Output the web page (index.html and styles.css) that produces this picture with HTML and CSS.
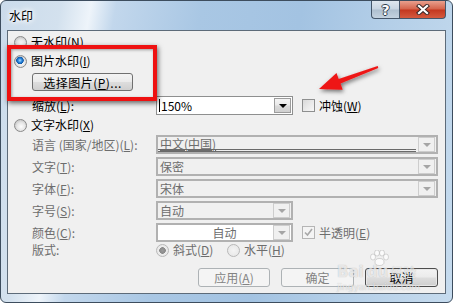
FILE: index.html
```html
<!DOCTYPE html>
<html lang="zh-CN">
<head>
  <meta charset="UTF-8">
  <title>水印</title>
  <link rel="stylesheet" href="styles.css">
</head>
<body>
  <div class="window">
    <div class="titlebar">
      <span class="title">水印</span>
      <div class="caption">
        <div class="cap-btn help">?</div>
        <div class="cap-btn close">
          <svg width="16" height="11" viewBox="0 0 16 11">
            <path d="M4 2 L12 9 M12 2 L4 9" stroke="#3b2a2a" stroke-width="4.2" stroke-linecap="square"/>
            <path d="M4 2 L12 9 M12 2 L4 9" stroke="#fff" stroke-width="2.2" stroke-linecap="square"/>
          </svg>
        </div>
      </div>
    </div>

    <div class="client">
      <div class="opt"><span class="radio"></span>无水印(<u>N</u>)</div>
      <div class="opt gap3"><span class="radio on"></span>图片水印(<u>I</u>)</div>
      <button class="btn pick">选择图片(<u>P</u>)...</button>

      <div class="field zoom">
        <span class="lbl">缩放(<u>L</u>):</span>
        <div class="combo narrow">
          <span class="val"><span class="caret"></span>150%</span>
          <span class="drop"><i></i></span>
        </div>
        <span class="check"></span><span>冲蚀(<u>W</u>)</span>
      </div>

      <div class="opt gap2"><span class="radio"></span>文字水印(<u>X</u>)</div>

      <div class="field first off">
        <span class="lbl">语言 (国家/地区)(<u>L</u>):</span>
        <div class="combo wide">
          <span class="val lang"><u>中文(中国)</u></span>
          <span class="drop"><i></i></span>
        </div>
      </div>
      <div class="field off">
        <span class="lbl">文字(<u>T</u>):</span>
        <div class="combo wide">
          <span class="val">保密</span>
          <span class="drop"><i></i></span>
        </div>
      </div>
      <div class="field off">
        <span class="lbl">字体(<u>F</u>):</span>
        <div class="combo wide">
          <span class="val">宋体</span>
          <span class="drop"><i></i></span>
        </div>
      </div>
      <div class="field off">
        <span class="lbl">字号(<u>S</u>):</span>
        <div class="combo narrow">
          <span class="val">自动</span>
          <span class="drop"><i></i></span>
        </div>
      </div>
      <div class="field off">
        <span class="lbl">颜色(<u>C</u>):</span>
        <div class="combo narrow white">
          <span class="val center">自动</span>
          <span class="drop"><i></i></span>
        </div>
        <span class="check checked">
          <svg width="9" height="9" viewBox="0 0 9 9"><path d="M1 4.5 L3.5 7 L8 1" fill="none" stroke="#a8a8a8" stroke-width="1.6"/></svg>
        </span><span>半透明(<u>E</u>)</span>
      </div>

      <div class="layout off">
        <span class="lbl">版式:</span>
        <span class="ropt"><span class="radio dis on"></span>斜式(<u>D</u>)</span>
        <span class="ropt"><span class="radio dis"></span>水平(<u>H</u>)</span>
      </div>

      <div class="actions">
        <button class="btn off">应用(<u>A</u>)</button>
        <button class="btn off">确定</button>
        <button class="btn default">取消</button>
      </div>
    </div>

    <!-- annotation drawn over the dialog -->
    <div class="mark-box"></div>
    <svg class="mark-arrow" width="90" height="50" viewBox="0 0 90 50">
      <defs>
        <filter id="sh" x="-20%" y="-40%" width="150%" height="190%">
          <feDropShadow dx="1" dy="2" stdDeviation="2" flood-color="#000" flood-opacity="0.55"/>
        </filter>
      </defs>
      <polygon filter="url(#sh)" fill="#ee1515"
        points="19,34 42.7,34.7 40.5,28.6 78.3,12.9 77.7,11.1 38.7,24 36.5,17.9"/>
    </svg>

    <div class="watermark">
      <svg class="paw" width="24" height="16" viewBox="0 0 24 16">
        <g fill="rgba(255,255,255,0.75)" stroke="rgba(120,120,120,0.35)" stroke-width="0.8">
          <ellipse cx="6" cy="7" rx="2.5" ry="3"/>
          <ellipse cx="10" cy="3" rx="2.5" ry="3"/>
          <ellipse cx="15" cy="3" rx="2.5" ry="3"/>
          <ellipse cx="19" cy="7" rx="2.5" ry="3"/>
          <ellipse cx="12.5" cy="12" rx="4.5" ry="3.5"/>
        </g>
      </svg>
      <div class="wm-main"><span class="wm-bai">Bai</span><span class="wm-du">du</span><span class="wm-jy">经验</span></div>
      <div class="wm-url">jingyan.baidu.com</div>
    </div>
  </div>
</body>
</html>
```

FILE: styles.css
```css
body {
  margin: 0;
  background: #fff;
  font-family: "Noto Sans CJK SC", "Liberation Sans", sans-serif;
  font-size: 12px;
  color: #000;
}

.window {
  position: relative;
  width: 453px;
  height: 303px;
  box-sizing: border-box;
  border: 1px solid #3d4d5e;
  border-radius: 6px;
  overflow: hidden;
  display: flex;
  flex-direction: column;
  background:
    linear-gradient(100deg, #cbdbeb 0%, #d3e1ee 12%, #eef4fa 18%, #c2d7ec 23%, #a9c7e4 40%, #a3c3e2 60%, #b4cfe8 78%, #c6dbee 100%);
}

.titlebar {
  height: 29px;
  flex-shrink: 0;
  display: flex;
  align-items: flex-start;
}

.title {
  margin: 7px 0 0 8px;
  line-height: 16px;
  text-shadow: 0 0 4px #fff, 0 0 6px #fff, 0 0 8px #fff;
}

.caption {
  margin-left: auto;
  margin-right: 6px;
  display: flex;
}

.cap-btn {
  height: 18px;
  box-sizing: border-box;
  border: 1px solid #44566a;
  border-top: none;
  display: flex;
  align-items: center;
  justify-content: center;
}

.help {
  width: 28px;
  border-right: none;
  border-bottom-left-radius: 4px;
  background: linear-gradient(#dfe7ef 0%, #c8d5e2 48%, #aebfcf 52%, #c3d2e0 100%);
  color: #fff;
  font: bold 14px "DejaVu Sans", sans-serif;
  text-shadow: 1px 0 #2f3d4c, -1px 0 #2f3d4c, 0 1px #2f3d4c, 0 -1px #2f3d4c;
}

.close {
  width: 47px;
  border-bottom-right-radius: 4px;
  background: linear-gradient(#e8a08e 0%, #d4624a 48%, #c3371f 52%, #d45a3f 100%);
}

.client {
  flex: 1;
  margin: 0 6px 8px;
  border: 1px solid #5d6b79;
  background: #f0f0f0;
  padding: 3px 6px 0 6px;
  display: flex;
  flex-direction: column;
}

u {
  text-decoration: underline;
  text-underline-offset: 1px;
}

.opt {
  display: flex;
  align-items: center;
  height: 16px;
  line-height: 16px;
}

.gap3 { margin-top: 3px; }
.gap2 { margin-top: 2px; }

.radio {
  width: 13px;
  height: 13px;
  box-sizing: border-box;
  border-radius: 50%;
  border: 1px solid #8a8a8a;
  background: radial-gradient(circle at 55% 60%, #fdfdfd 0, #e6e6e6 4px, #d0d0d0 6px);
  margin-right: 4px;
  flex-shrink: 0;
}

.radio.on {
  background:
    radial-gradient(circle at 45% 40%, #a6dcff 0, #2a86dc 2px, #0f58a8 3.5px, transparent 4px),
    radial-gradient(circle at 55% 60%, #fdfdfd 0, #e6e6e6 4px, #d0d0d0 6px);
}

.radio.dis {
  border-color: #b8b8b8;
  background: radial-gradient(circle, #f4f4f4 0, #e8e8e8 6px);
}

.radio.dis.on {
  background:
    radial-gradient(circle, #9a9a9a 0, #8a8a8a 3px, transparent 3.6px),
    radial-gradient(circle, #f4f4f4 0, #e8e8e8 6px);
}

.btn {
  height: 19px;
  box-sizing: border-box;
  border: 1px solid #707070;
  border-radius: 3px;
  background: linear-gradient(#f3f3f3 0%, #ebebeb 48%, #dddddd 52%, #cfcfcf 100%);
  font-family: inherit;
  font-size: 12px;
  line-height: 15px;
  padding: 0;
  color: #000;
  text-align: center;
}

.pick {
  width: 101px;
  height: 18px;
  margin: 4px 0 0 18px;
  letter-spacing: 0.5px;
}

.field {
  display: flex;
  align-items: center;
  height: 19px;
  line-height: 16px;
  margin-top: 3px;
}

.field.zoom { margin-top: 5px; }
.field.first { margin-top: 2px; }

.lbl {
  width: 124px;
  margin-left: 18px;
  flex-shrink: 0;
  white-space: nowrap;
}

.off { color: #6d6d6d; }

.combo {
  height: 19px;
  box-sizing: border-box;
  border: 1px solid #8e8f8f;
  background: #fff;
  display: flex;
  align-items: center;
}

.combo.narrow { width: 137px; }
.combo.wide { width: 282px; }

.val {
  flex: 1;
  padding-left: 2px;
  line-height: 15px;
  display: flex;
  align-items: center;
}

.val.center { justify-content: center; padding-left: 18px; }

.caret {
  width: 1px;
  height: 13px;
  background: #000;
  margin-right: 1px;
}

.drop {
  width: 17px;
  height: 15px;
  box-sizing: border-box;
  margin-right: 1px;
  border: 1px solid #9c9c9c;
  background: linear-gradient(#f4f4f4 0%, #e9e9e9 48%, #dadada 52%, #d0d0d0 100%);
  display: flex;
  align-items: center;
  justify-content: center;
}

.drop i {
  width: 0;
  height: 0;
  border-left: 4px solid transparent;
  border-right: 4px solid transparent;
  border-top: 4px solid #000;
}

.off .combo {
  border: 2px solid #b1b1b1;
  background: #f0f0f0;
}

.off .combo.white { background: #fff; }

.off .drop {
  border-color: #cdcdcd;
  background: #f0f0f0;
}

.off .drop i { border-top-color: #a5a5a5; }

.val.lang {
  align-self: stretch;
  border-bottom: 3px double #6a6a6a;
  margin-right: 2px;
}

.check {
  width: 13px;
  height: 13px;
  box-sizing: border-box;
  border: 1px solid #8e8f8f;
  background: linear-gradient(135deg, #d9d9d9, #f8f8f8);
  margin: 0 4px 0 9px;
  display: flex;
  align-items: center;
  justify-content: center;
}

.check.checked {
  border-color: #b5b5b5;
  background: #f4f4f4;
}

.layout {
  display: flex;
  align-items: center;
  height: 16px;
  line-height: 16px;
}

.ropt {
  display: flex;
  align-items: center;
  width: 71px;
}

.actions {
  display: flex;
  justify-content: flex-end;
  gap: 11px;
  margin: 10px 1px 0 0;
}

.actions .btn { width: 73px; }
.actions .btn:first-child { width: 72px; }

.btn.off {
  border-color: #adb2b5;
  background: #f4f4f4;
  color: #838383;
}

.btn.default {
  border-color: #4d4d4d;
  box-shadow: inset 0 0 0 1px #e8e8e8;
}

.mark-box {
  position: absolute;
  left: 6px;
  top: 44px;
  width: 150px;
  height: 56px;
  box-sizing: border-box;
  border: 4px solid #ee1111;
  box-shadow: 1px 2px 5px rgba(0, 0, 0, 0.6), inset 1px 1px 3px rgba(0, 0, 0, 0.35);
}

.mark-arrow {
  position: absolute;
  left: 299px;
  top: 54px;
}

.watermark {
  position: absolute;
  left: 336px;
  top: 249px;
  width: 90px;
  color: rgba(255, 255, 255, 0.7);
  text-shadow: 0 0 1px rgba(90, 90, 90, 0.45);
}

.paw {
  display: block;
  margin-left: 30px;
}

.wm-main {
  display: flex;
  align-items: baseline;
  margin-top: -4px;
  line-height: 16px;
  font: bold 15px "DejaVu Sans", sans-serif;
}

.wm-du { margin-left: 3px; }

.wm-jy {
  margin-left: 2px;
  font: 13px "Noto Sans CJK SC", sans-serif;
}

.wm-url {
  font: 9px "DejaVu Sans", sans-serif;
  line-height: 10px;
  margin-top: 1px;
}
```
